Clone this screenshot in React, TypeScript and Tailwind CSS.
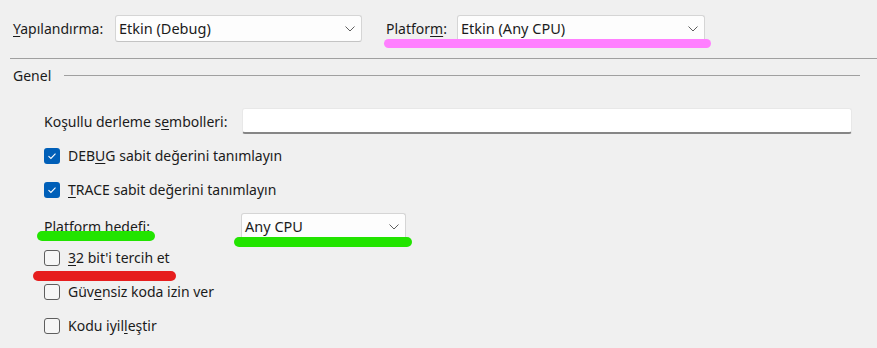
import React from "react";

function Chevron() {
  return (
    <svg width="10" height="6" viewBox="0 0 10 6" className="shrink-0">
      <path d="M0.5 0.5 L5 5 L9.5 0.5" fill="none" stroke="#5f5f5f" strokeWidth="1" />
    </svg>
  );
}

function Combo({ text, w }: { text: string; w: string }) {
  return (
    <div
      className={`${w} h-[27px] flex items-center justify-between pl-[3px] pr-[6px] bg-[#fdfdfd] border border-[#d5d5d5] border-b-[#c4c4c4] rounded-[3px]`}
    >
      <span className="leading-none text-[14.5px]">{text}</span>
      <Chevron />
    </div>
  );
}

function Check({ checked, children }: { checked?: boolean; children: React.ReactNode }) {
  return (
    <div className="h-[20px] flex items-center">
      {checked ? (
        <div className="w-[16px] h-[16px] rounded-[3px] bg-[#005fb8] flex items-center justify-center shrink-0">
          <svg width="10" height="8" viewBox="0 0 10 8">
            <path d="M1.5 4.2 L3.9 6.4 L8.5 1.6" fill="none" stroke="#ffffff" strokeWidth="1.1" />
          </svg>
        </div>
      ) : (
        <div className="w-[16px] h-[16px] rounded-[3px] border border-[#5e5e5e] bg-[#f6f6f6] shrink-0" />
      )}
      <span className="ml-[8px] leading-none">{children}</span>
    </div>
  );
}

export default function App() {
  return (
    <div
      className="relative w-[877px] h-[348px] overflow-hidden bg-[#f0f0f0] text-[14px] text-[#1b1b1b]"
      style={{ fontFamily: '"Noto Sans", "Open Sans", sans-serif' }}
    >
      {/* top row */}
      <div className="flex items-center pl-[13px] pt-[15px]">
        <div className="w-[102px]">
          <u className="underline-offset-2">Y</u>apılandırma:
        </div>
        <Combo text="Etkin (Debug)" w="w-[247px]" />
        <div className="ml-[24px] w-[71px]">
          Platfor<u className="underline-offset-2">m</u>:
        </div>
        <Combo text="Etkin (Any CPU)" w="w-[248px]" />
      </div>

      <div className="ml-[10px] mt-[16px] h-px bg-[#a0a0a0]" />

      {/* Genel */}
      <div className="mt-[6px] h-[20px] flex items-center pl-[13px]">
        <span className="w-[51px]">Genel</span>
        <div className="w-[796px] h-px bg-[#a0a0a0]" />
      </div>

      <div className="pl-[44px]">
        <div className="mt-[23px] h-[26px] flex items-center">
          <div className="w-[198px]">
            Koşullu derleme s<u className="underline-offset-2">e</u>mbolleri:
          </div>
          <div className="w-[610px] h-[26px] bg-white border border-[#e8e8e8] border-b-2 border-b-[#868686] rounded-[3px]" />
        </div>

        <div className="mt-[12px]">
          <Check checked>
            DEB<u className="underline-offset-2">U</u>G sabit değerini tanımlayın
          </Check>
        </div>
        <div className="mt-[14px]">
          <Check checked>
            <u className="underline-offset-2">T</u>RACE sabit değerini tanımlayın
          </Check>
        </div>

        <div className="mt-[13px] h-[27px] flex items-center">
          <div className="w-[197px]">Platform hedefi:</div>
          <Combo text="Any CPU" w="w-[165px]" />
        </div>

        <div className="mt-[8px]">
          <Check>
            <u className="underline-offset-2">3</u>2 bit'i tercih et
          </Check>
        </div>
        <div className="mt-[14px]">
          <Check>
            Güv<u className="underline-offset-2">e</u>nsiz koda izin ver
          </Check>
        </div>
        <div className="mt-[14px]">
          <Check>
            Kodu iyil<u className="underline-offset-2">l</u>eştir
          </Check>
        </div>
      </div>

      {/* annotation highlights */}
      <div className="absolute left-[384px] top-[39px] w-[327px] h-[9px] rounded-full bg-[#ff80ff]" />
      <div className="absolute left-[37px] top-[231px] w-[118px] h-[10px] rounded-full bg-[#22e400]" />
      <div className="absolute left-[234px] top-[237px] w-[178px] h-[10px] rounded-full bg-[#22e400]" />
      <div className="absolute left-[33px] top-[271px] w-[143px] h-[10px] rounded-full bg-[#e61e1e]" />
    </div>
  );
}
